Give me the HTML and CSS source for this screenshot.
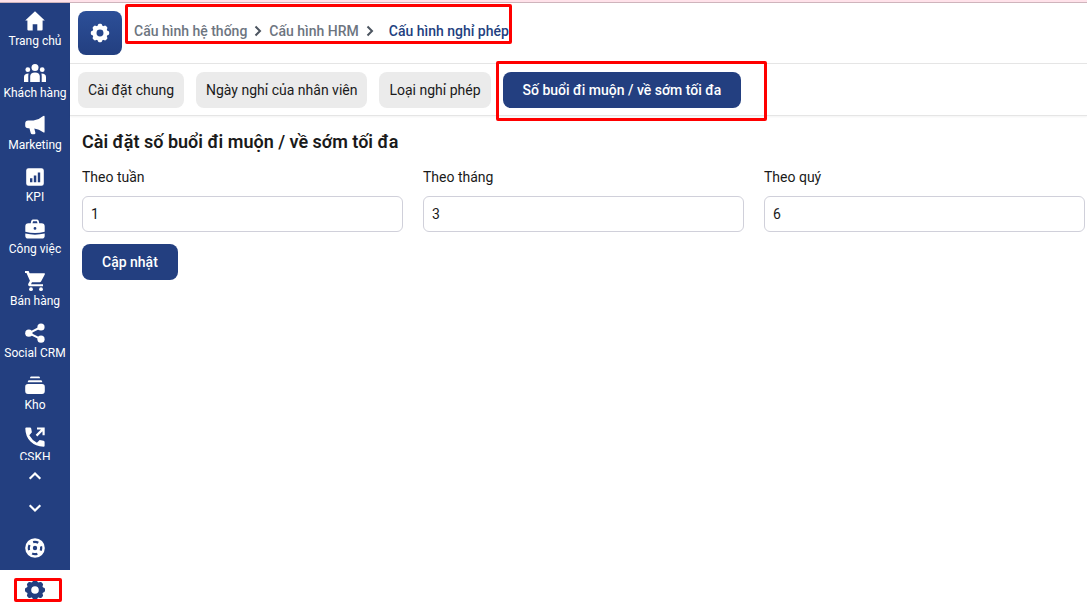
FILE: index.html
```html
<!DOCTYPE html>
<html lang="vi">
<head>
    <meta charset="UTF-8">
    <meta name="viewport" content="width=device-width, initial-scale=1.0">
    <title>Cấu hình nghỉ phép</title>
    <link rel="stylesheet" href="styles.css">
</head>
<body>
    <!-- shared gear icon -->
    <svg class="symbols" aria-hidden="true">
        <symbol id="gear" viewBox="0 0 24 24">
            <circle cx="12" cy="12" r="6" fill="none" stroke="currentColor" stroke-width="4.4"/>
            <g fill="currentColor">
                <path id="teeth" d="M8.8 5.5 9.8 3Q10.2 2 11.2 2H12.8Q13.8 2 14.2 3L15.2 5.5zM8.8 18.5 9.8 21Q10.2 22 11.2 22H12.8Q13.8 22 14.2 21L15.2 18.5z"/>
                <use href="#teeth" transform="rotate(45 12 12)"/>
                <use href="#teeth" transform="rotate(90 12 12)"/>
                <use href="#teeth" transform="rotate(135 12 12)"/>
            </g>
        </symbol>
    </svg>

    <div class="top-line"></div>
    <div class="app">
        <aside class="sidebar">
            <nav class="menu">
                <a class="menu-item" href="#">
                    <svg class="icon" viewBox="0 0 24 24"><path d="M12 2.3 21.8 11.6H19.6V20.4Q19.6 21.5 18.5 21.5H14.3V15.2H9.7V21.5H5.5Q4.4 21.5 4.4 20.4V11.6H2.2z"/></svg>
                    <span>Trang chủ</span>
                </a>
                <a class="menu-item" href="#">
                    <svg class="icon" viewBox="0 0 24 24"><circle cx="12" cy="6.5" r="3.5"/><circle cx="4.8" cy="8.7" r="2.4"/><circle cx="19.2" cy="8.7" r="2.4"/><path d="M7.2 21V15.3Q7.2 11.5 12 11.5T16.8 15.3V21zM1 21V16Q1 12.9 5.6 12.6Q5.3 13.7 5.3 15V21zM23 21V16Q23 12.9 18.4 12.6Q18.7 13.7 18.7 15V21z"/></svg>
                    <span>Khách hàng</span>
                </a>
                <a class="menu-item" href="#">
                    <svg class="icon" viewBox="0 0 24 24"><path d="M2.2 10.5Q2.2 7.5 5.2 7.5H10.5Q16 6.8 20.2 3Q21.6 2 21.6 3.8V18.6Q21.6 20.3 20.2 19.2Q16 15.9 11.3 15.4L12.4 19.8Q12.6 21.2 11.4 21.2H9.2Q8.1 21.2 7.8 20.2L6.4 15.3H5.2Q2.2 15.3 2.2 12.5z"/></svg>
                    <span>Marketing</span>
                </a>
                <a class="menu-item" href="#">
                    <svg class="icon" viewBox="0 0 24 24"><path fill-rule="evenodd" d="M5.5 3.2H18.5Q20.8 3.2 20.8 5.5V18.5Q20.8 20.8 18.5 20.8H5.5Q3.2 20.8 3.2 18.5V5.5Q3.2 3.2 5.5 3.2zM7 13.2V17.2H9.4V13.2zM10.8 10.4V17.2H13.3V10.4zM14.8 7.4V17.2H17.2V7.4z"/></svg>
                    <span>KPI</span>
                </a>
                <a class="menu-item" href="#">
                    <svg class="icon" viewBox="0 0 24 24"><path fill-rule="evenodd" d="M7.8 6.2Q8 2.4 10 2.4H14Q16 2.4 16.2 6.2H18.5Q21.7 6.2 21.7 9.4V14.7Q12 17.3 2.3 14.7V9.4Q2.3 6.2 5.5 6.2zM9.5 6.2H14.5L13.9 4.2H10.1zM12 10A1.4 1.4 0 1 0 12 12.8A1.4 1.4 0 1 0 12 10zM2.3 16.6Q12 18.8 21.7 16.6V18.7Q21.7 21.5 19 21.5H5Q2.3 21.5 2.3 18.7z"/></svg>
                    <span>Công việc</span>
                </a>
                <a class="menu-item" href="#">
                    <svg class="icon" viewBox="0 0 24 24"><path d="M2 2H5.6L6.6 4.2H21.2Q22.4 4.2 21.8 5.4L18.2 12.3Q17.7 13.2 16.7 13.2H9L8 15.2H20V17.2H6.8Q4.4 16.8 5.4 14.5L6.9 11.8 3.5 4H2z"/><circle cx="8" cy="20.2" r="1.9"/><circle cx="18" cy="20.2" r="1.9"/></svg>
                    <span>Bán hàng</span>
                </a>
                <a class="menu-item" href="#">
                    <svg class="icon" viewBox="0 0 24 24"><path d="M18 6 6 12.2 18 18.2" fill="none" stroke="currentColor" stroke-width="2"/><circle cx="18" cy="6" r="3.6"/><circle cx="5.8" cy="12.2" r="3.6"/><circle cx="18" cy="18.2" r="3.6"/></svg>
                    <span>Social CRM</span>
                </a>
                <a class="menu-item" href="#">
                    <svg class="icon" viewBox="0 0 24 24"><path d="M8 3.5H16Q17 3.5 17 5.3H7Q7 3.5 8 3.5zM6 7.2H18Q19.2 7.2 19.3 9.2H4.7Q4.8 7.2 6 7.2zM5 11.1H19Q21.8 11.1 21.8 13.9V18Q21.8 20.9 19 20.9H5Q2.2 20.9 2.2 18V13.9Q2.2 11.1 5 11.1z"/></svg>
                    <span>Kho</span>
                </a>
                <a class="menu-item" href="#">
                    <svg class="icon" viewBox="0 0 24 24"><path d="M3.3 2.5H7Q8 2.5 8.2 3.5L8.9 7.3 6.3 10.2Q9 15.1 13.9 17.7L16.7 15.1 20.6 15.8Q21.6 16 21.6 17V20.7Q21.6 21.7 20.6 21.7Q12.5 21.4 7.5 16.5T2.3 3.5Q2.3 2.5 3.3 2.5z"/><path d="M13.5 10.6 20 4.1M14 3.5H20.6V10.2" fill="none" stroke="currentColor" stroke-width="2.2"/></svg>
                    <span>CSKH</span>
                </a>
            </nav>
            <button class="side-btn" aria-label="Lên"><svg class="icon" viewBox="0 0 24 24"><path class="line" d="M6.7 14.7 12 9.5 17.3 14.7"/></svg></button>
            <button class="side-btn" aria-label="Xuống"><svg class="icon" viewBox="0 0 24 24"><path class="line" d="M6.7 9.3 12 14.5 17.3 9.3"/></svg></button>
            <button class="side-btn help" aria-label="Hỗ trợ">
                <svg class="icon" viewBox="0 0 24 24"><circle cx="12" cy="12" r="9.8"/><circle cx="12" cy="12" r="6.2" fill="none" stroke="#233f80" stroke-width="2.2" stroke-dasharray="5.4 4.34" stroke-dashoffset="2.7"/><circle cx="12" cy="12" r="2.2" fill="#233f80"/></svg>
            </button>
            <button class="side-btn settings marked" aria-label="Cài đặt"><svg class="icon"><use href="#gear"/></svg></button>
        </aside>

        <main class="main">
            <header class="header">
                <button class="gear-btn" aria-label="Cấu hình"><svg class="icon"><use href="#gear"/></svg></button>
                <nav class="breadcrumb marked">
                    <a href="#">Cấu hình hệ thống</a>
                    <svg class="arrow" viewBox="0 0 12 12"><path d="M3.5 1.5 8 6 3.5 10.5"/></svg>
                    <a href="#">Cấu hình HRM</a>
                    <svg class="arrow" viewBox="0 0 12 12"><path d="M3.5 1.5 8 6 3.5 10.5"/></svg>
                    <a class="current" href="#">Cấu hình nghỉ phép</a>
                </nav>
            </header>

            <div class="tabs">
                <button class="tab">Cài đặt chung</button>
                <button class="tab">Ngày nghỉ của nhân viên</button>
                <button class="tab">Loại nghỉ phép</button>
                <div class="tab-wrap marked">
                    <button class="tab active">Số buổi đi muộn / về sớm tối đa</button>
                </div>
            </div>

            <form class="content">
                <h1>Cài đặt số buổi đi muộn / về sớm tối đa</h1>
                <div class="fields">
                    <div class="field">
                        <label for="week">Theo tuần</label>
                        <input type="text" id="week" value="1">
                    </div>
                    <div class="field">
                        <label for="month">Theo tháng</label>
                        <input type="text" id="month" value="3">
                    </div>
                    <div class="field">
                        <label for="quarter">Theo quý</label>
                        <input type="text" id="quarter" value="6">
                    </div>
                </div>
                <button type="button" class="btn-update">Cập nhật</button>
            </form>
        </main>
    </div>
</body>
</html>
```
FILE: styles.css
```css
* { box-sizing: border-box; }
body {
    margin: 0;
    height: 100vh;
    display: flex;
    flex-direction: column;
    overflow: hidden;
    font-family: Roboto, "Noto Sans", sans-serif;
    font-size: 14px;
    line-height: 20px;
    color: #1a1a1a;
    background: #fff;
}
button, input { font: inherit; color: inherit; }
button { border: none; cursor: pointer; }
a { color: inherit; text-decoration: none; }
.symbols { position: absolute; width: 0; height: 0; }
.icon { width: 24px; height: 24px; fill: currentColor; flex: none; }
.top-line { height: 3px; flex: none; background: #ffe2ea; border-bottom: 1px solid #cfb4bc; }
.app { flex: 1; min-height: 0; display: flex; }

/* sidebar */
.sidebar { width: 70px; flex: none; display: flex; flex-direction: column; background: #233f80; color: #fff; }
.menu { flex: 1; min-height: 0; overflow: hidden; }
.menu-item {
    display: flex;
    flex-direction: column;
    align-items: center;
    padding: 6px 0;
    font-size: 12px;
    line-height: 16px;
    white-space: nowrap;
}
.side-btn {
    height: 32px;
    flex: none;
    padding: 0;
    display: flex;
    align-items: center;
    justify-content: center;
    background: none;
}
.line { fill: none; stroke: currentColor; stroke-width: 2.2; }
.help { height: 46px; padding-top: 2px; }
.settings { height: 37px; padding-top: 3px; background: #fff; color: #233f80; }

/* red highlight frames */
.marked { position: relative; }
.marked::after { content: ""; position: absolute; border: 3px solid #f00; border-radius: 2px; pointer-events: none; }
.settings::after { inset: 8px 8px 5px 14px; }
.breadcrumb::after { inset: -7px -3px 3px -9px; }
.tab-wrap::after { inset: -11px -26px -13px -7px; }

/* header */
.main { flex: 1; min-width: 0; }
.header { display: flex; gap: 12px; padding: 8px; border-bottom: 1px solid #e5e5e5; }
.gear-btn {
    width: 44px;
    height: 44px;
    padding: 0;
    display: flex;
    align-items: center;
    justify-content: center;
    border-radius: 8px;
    background: linear-gradient(#2c4f98, #233f80);
    color: #fff;
}
.gear-btn .icon { width: 22px; height: 22px; }
.breadcrumb { display: flex; align-items: center; height: 40px; gap: 5px; font-weight: 500; color: #6d757f; white-space: nowrap; }
.breadcrumb .current { color: #233f80; margin-left: 8px; }
.arrow { width: 12px; height: 12px; fill: none; stroke: #4c5560; stroke-width: 2; }
.breadcrumb::after { inset: -7px -3px 7px -9px; }

/* tabs */
.tabs { display: flex; gap: 12px; padding: 8px 8px 7px; border-bottom: 1px solid #e5e5e5; box-shadow: 0 1px 2px rgba(0, 0, 0, 0.05); }
.tab { height: 36px; padding: 0 10px; border-radius: 8px; background: #ebebeb; white-space: nowrap; }
.tab.active { padding: 0 20px; background: #233f80; color: #fff; font-weight: 500; }

/* form */
.content { padding: 14px 2px 0 12px; }
h1 { margin: 0 0 12px; font-size: 18px; line-height: 24px; font-weight: 600; }
.fields { display: flex; gap: 20px; margin-bottom: 12px; }
.field { flex: 1; min-width: 0; display: flex; flex-direction: column; gap: 8px; }
.field label { line-height: 22px; }
.field input { width: 100%; height: 36px; padding: 0 8px; border: 1px solid #d0d0da; border-radius: 6px; background: #fff; }
.btn-update { height: 36px; padding: 0 20px; border-radius: 8px; background: #233f80; color: #fff; font-weight: 500; }
```
